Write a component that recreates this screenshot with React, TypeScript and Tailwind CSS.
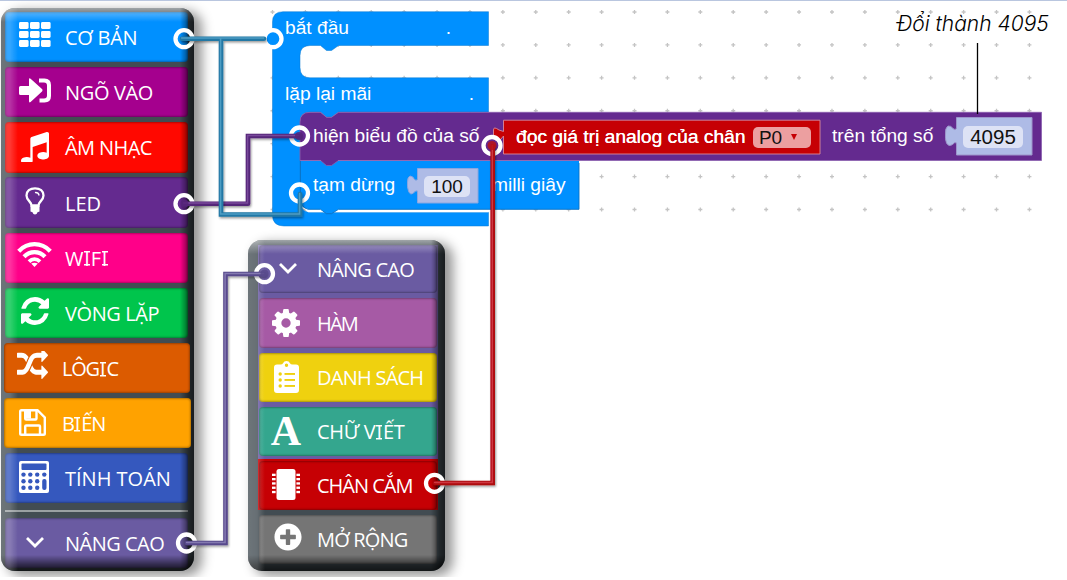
import React from "react";
import { FaPlusCircle } from "react-icons/fa";

function GridIcon() {
  return (
    <svg viewBox="0 0 32 25" className="h-[25px] w-8" fill="#fff">
      {[0, 11, 22].map((x) => [0, 9, 18].map((y) => <rect key={`${x}-${y}`} x={x} y={y} width="9.6" height="7" rx="1.4" />))}
    </svg>
  );
}
function SignInIcon() {
  return (
    <svg viewBox="0 0 32 25" className="h-[25px] w-8" fill="#fff">
      <path d="M1.5 8H10V1.5Q10-.5 11.6.8L23 11Q24 12.2 23 13.4L11.6 24Q10 25.2 10 23V17H1.5Q0 17 0 15.5V9.5Q0 8 1.5 8Z" />
      <path d="M20 .5h5.5Q32 .5 32 7v11Q32 24.5 25.5 24.5H20.5V20.5H25Q28 20.5 28 17.5V7.5Q28 4.5 25 4.5H20Z" />
    </svg>
  );
}
function MusicIcon() {
  return (
    <svg viewBox="128 128 1536 1536" className="h-[30px] w-7" fill="#fff" preserveAspectRatio="none">
      <path d="M1664 224v1120q0 50-34 89t-86 60.5-103.5 32-96.5 10.5-96.5-10.5-103.5-32-86-60.5-34-89 34-89 86-60.5 103.5-32 96.5-10.5q105 0 192 39v-537l-768 237v709q0 50-34 89t-86 60.5-103.5 32-96.5 10.5-96.5-10.5-103.5-32-86-60.5-34-89 34-89 86-60.5 103.5-32 96.5-10.5q105 0 192 39v-967q0-31 19-56.5t49-35.5l832-256q12-4 28-4 40 0 68 28t28 68z" />
    </svg>
  );
}
function BulbIcon() {
  return (
    <svg viewBox="0 0 20 28" className="h-7 w-5" fill="none" stroke="#fff">
      <path d="M6.5 18.5C6.5 14.5 1.5 13.5 1.5 8.5C1.5 4 5 1.3 10 1.3S18.5 4 18.5 8.5C18.5 13.5 13.5 14.5 13.5 18.5Z" strokeWidth="2.3" />
      <path d="M10.5 5.5Q13.5 5.5 14 8" strokeWidth="1.3" strokeLinecap="round" />
      <path d="M5.5 18.5h9v6l-2 .8q-.6 2.2-2.5 2.2t-2.5-2.2l-2-.8Z" fill="#fff" stroke="none" />
    </svg>
  );
}
function WifiIcon() {
  return (
    <svg viewBox="0 0 35 25" className="h-[25px] w-[35px]" fill="none" stroke="#fff" strokeWidth="4.3">
      <path d="M1.7 9.2Q8.5 2.2 17.5 2.2T33.3 9.2" />
      <path d="M7 14.7Q11.5 10.2 17.5 10.2T28 14.7" />
      <path d="M12 19.7Q14.5 17.2 17.5 17.2T23 19.7" strokeWidth="3.8" />
      <path d="M14.2 21.6Q17.5 19.8 20.8 21.6L17.5 25Z" fill="#fff" stroke="none" />
    </svg>
  );
}
function RefreshIcon() {
  return (
    <svg viewBox="128 128 1536 1536" className="h-7 w-7" fill="#fff">
      <path d="M1639 1056q0 5-1 7-64 268-268 434.5t-478 166.5q-146 0-282.5-55t-243.5-157l-129 129q-19 19-45 19t-45-19-19-45v-448q0-26 19-45t45-19h448q26 0 45 19t19 45-19 45l-137 137q71 66 161 102t187 36q134 0 250-65t186-179q11-17 53-117 8-23 30-23h192q13 0 22.5 9.5t9.5 22.5zm25-800v448q0 26-19 45t-45 19h-448q-26 0-45-19t-19-45 19-45l138-138q-148-137-349-137-134 0-250 65t-186 179q-11 17-53 117-8 23-30 23h-199q-13 0-22.5-9.5t-9.5-22.5v-7q65-268 270-434.5t480-166.5q146 0 284 55.5t245 156.5l130-129q19-19 45-19t45 19 19 45z" />
    </svg>
  );
}
function ShuffleIcon() {
  return (
    <svg viewBox="0 160 1792 1472" className="h-7 w-[31px]" fill="#fff" preserveAspectRatio="none">
      <path d="M666 481q-60 92-137 273-22-45-37-72.5t-40.5-63.5-51-56.5-63-35-81.5-14.5h-224q-14 0-23-9t-9-23v-192q0-14 9-23t23-9h224q250 0 410 225zm1126 799q0 14-9 23l-320 320q-9 9-23 9-13 0-22.5-9.5t-9.5-22.5v-192q-32 0-85 .5t-81 1-73-1-71-5-64-10.5-63-18.5-58-28.5-59-40-55-53.5-56-69.5q59-93 136-273 22 45 37 72.5t40.5 63.5 51 56.5 63 35 81.5 14.5h256v-192q0-14 9-23t23-9q12 0 24 10l319 319q9 9 9 23zm0-896q0 14-9 23l-320 320q-9 9-23 9-13 0-22.5-9.5t-9.5-22.5v-192h-256q-48 0-87 15t-69 45-51 61.5-45 77.5q-32 62-78 171-29 66-49.5 111t-54 105-64 100-74 83-90 68.5-106.5 42-128 16.5h-224q-14 0-23-9t-9-23v-192q0-14 9-23t23-9h224q48 0 87-15t69-45 51-61.5 45-77.5q32-62 78-171 29-66 49.5-111t54-105 64-100 74-83 90-68.5 106.5-42 128-16.5h256v-192q0-14 9-23t23-9q12 0 24 10l319 319q9 9 9 23z" />
    </svg>
  );
}
function SaveIcon() {
  return (
    <svg viewBox="0 0 27 27" className="h-[27px] w-[27px]" fill="none" stroke="#fff" strokeWidth="2.4">
      <path d="M2.5 1.2H18.5L25.8 8.5V24.5Q25.8 25.8 24.5 25.8H2.5Q1.2 25.8 1.2 24.5V2.5Q1.2 1.2 2.5 1.2Z" />
      <path d="M6.2 25V17.5Q6.2 16.5 7.2 16.5H20Q21 16.5 21 17.5V25M6.2 1.5V9.5Q6.2 10.5 7.2 10.5H16.5Q17.5 10.5 17.5 9.5V1.5" />
      <path d="M7 2H12V9.5H7Z" fill="#fff" stroke="none" />
    </svg>
  );
}
function CalculatorIcon() {
  return (
    <svg viewBox="0 0 30 32" className="h-8 w-[30px]" fill="#3558be">
      <rect width="30" height="32" rx="2" fill="#fff" />
      <rect x="2.5" y="2.5" width="25" height="6.5" rx="1" />
      {[4.5, 11.3, 18.2].map((x) => [13.6, 20.2, 26.8].map((y) => <circle key={`${x}-${y}`} cx={x} cy={y} r="2.2" />))}
      <circle cx="25.3" cy="13.6" r="2.2" />
      <rect x="23.2" y="18" width="4.3" height="11" rx="2" />
    </svg>
  );
}
function Chevron() {
  return (
    <svg viewBox="0 0 18 11" className="h-[11px] w-[18px]" fill="none" stroke="#fff" strokeWidth="2.8">
      <path d="M1 1L9 9L17 1" />
    </svg>
  );
}
function GearIcon() {
  return (
    <svg viewBox="128 128 1536 1536" className="h-7 w-7" fill="#fff">
      <path d="M1152 896q0-106-75-181t-181-75-181 75-75 181 75 181 181 75 181-75 75-181zm512-109v222q0 12-8 23t-20 13l-185 28q-19 54-39 91 35 50 107 138 10 12 10 25t-9 23q-27 37-99 108t-94 71q-12 0-26-9l-138-108q-44 23-91 38-16 136-29 186-7 28-36 28h-222q-14 0-24.5-8.5t-11.5-21.5l-28-184q-49-16-90-37l-141 107q-10 9-25 9-14 0-25-11-126-114-165-168-7-10-7-23 0-12 8-23 15-21 51-66.5t54-70.5q-27-50-41-99l-183-27q-13-2-21-12.5t-8-23.5v-222q0-12 8-23t19-13l186-28q14-46 39-92-40-57-107-138-10-12-10-24 0-10 9-23 26-36 98.5-107.5t94.5-71.5q13 0 26 10l138 107q44-23 91-38 16-136 29-186 7-28 36-28h222q14 0 24.5 8.5t11.5 21.5l28 184q49 16 90 37l142-107q9-9 24-9 13 0 25 10 129 119 165 170 7 8 7 22 0 12-8 23-15 21-51 66.5t-54 70.5q26 50 41 98l183 28q13 2 21 12.5t8 23.5z" />
    </svg>
  );
}
function ListIcon() {
  return (
    <svg viewBox="0 0 25 32" className="h-8 w-[25px]" fill="#fff">
      <path fillRule="evenodd" d="M3 3.5H6.5Q8.5 3.5 9 2.2Q10 0 12.5 0T16 2.2Q16.5 3.5 18.5 3.5H22Q25 3.5 25 6.5V29Q25 32 22 32H3Q0 32 0 29V6.5Q0 3.5 3 3.5ZM12.5 2.5a1.7 1.7 0 1 0 0 3.4a1.7 1.7 0 1 0 0-3.4Z" />
      <g fill="#efd10f">
        {[13, 19, 25].map((y) => (
          <g key={y}>
            <circle cx="6.2" cy={y} r="1.7" />
            <rect x="10.5" y={y - 1} width="10.5" height="1.9" />
          </g>
        ))}
      </g>
    </svg>
  );
}
function ChipIcon() {
  return (
    <svg viewBox="0 0 28 31" className="h-[31px] w-7" fill="#fff">
      <rect x="4.5" width="19" height="31" rx="2.5" />
      {[4.7, 9, 13.3, 17.6, 21.9].map((y) => (
        <g key={y}>
          <rect y={y} width="3.6" height="2.3" />
          <rect x="24.4" y={y} width="3.6" height="2.3" />
        </g>
      ))}
    </svg>
  );
}

type Item = { label: string; icon: React.ReactNode; row: string; text: string; iconBox?: string };

const mainItems: Item[] = [
  { label: "CƠ BẢN", icon: <GridIcon />, row: "h-[50.5px] bg-[#0090ff]", text: "tracking-[-0.3px]", iconBox: "pb-1" },
  { label: "NGÕ VÀO", icon: <SignInIcon />, row: "h-[50.5px] bg-[#a5008e]", text: "tracking-[-0.35px]", iconBox: "pb-1" },
  { label: "ÂM NHẠC", icon: <MusicIcon />, row: "h-[50.5px] bg-[#ff0800]", text: "tracking-[-0.6px]" },
  { label: "LED", icon: <BulbIcon />, row: "h-[50.5px] bg-[#642a8f]", text: "tracking-[0px]", iconBox: "pb-1" },
  { label: "WIFI", icon: <WifiIcon />, row: "h-[50.5px] bg-[#ff0089]", text: "tracking-[-0.2px]", iconBox: "pb-1.5 pr-0.5" },
  { label: "VÒNG LẶP", icon: <RefreshIcon />, row: "h-[50.5px] bg-[#00c54c]", text: "tracking-[-0.4px]", iconBox: "pb-1" },
  { label: "LÔGIC", icon: <ShuffleIcon />, row: "z-10 -ml-px w-[186px] h-[50px] bg-[#dc5b00]", text: "tracking-[-1.2px] -ml-0.5", iconBox: "pr-1 pb-1.5" },
  { label: "BIẾN", icon: <SaveIcon />, row: "z-10 -ml-px w-[187px] h-[50px] bg-[#ffa200]", text: "tracking-[-1.2px] -ml-0.5", iconBox: "pr-1 pb-0.5" },
  { label: "TÍNH TOÁN", icon: <CalculatorIcon />, row: "h-[50.5px] bg-[#3558be]", text: "tracking-[0px]", iconBox: "pb-0.5 pr-0.5" },
];

const advancedItems: Item[] = [
  { label: "NÂNG CAO", icon: <Chevron />, row: "h-[48px] bg-[#6a5ba2]", text: "tracking-[-0.8px]", iconBox: "pb-0.5" },
  { label: "HÀM", icon: <GearIcon />, row: "h-[49.5px] bg-[#a65aa5]", text: "tracking-[-1.8px]", iconBox: "pr-1" },
  { label: "DANH SÁCH", icon: <ListIcon />, row: "h-[49px] bg-[#efd10f]", text: "tracking-[-0.75px]", iconBox: "pr-1" },
  { label: "CHỮ VIẾT", icon: <span className="[font-family:'Liberation_Serif',serif] text-[42px] font-bold leading-none text-white">A</span>, row: "h-[49px] bg-[#34a68e]", text: "tracking-[-0.3px]", iconBox: "pr-1" },
  { label: "CHÂN CẮM", icon: <ChipIcon />, row: "h-[49.5px] bg-[#c60004]", text: "tracking-[-1px]", iconBox: "pr-1 pb-0.5" },
];

const label = "whitespace-nowrap pt-0.5 [font-family:'Open_Sans','Noto_Sans',sans-serif] text-[20px] leading-none text-white";
const serifI =
  "inline-block h-5 w-[7.5px] text-center leading-none tracking-normal bg-no-repeat bg-[linear-gradient(#fff,#fff),linear-gradient(#fff,#fff)] bg-[length:6px_1.5px] bg-[position:center_2.5px,center_15.5px]";
const rowBase = "relative flex shrink-0 items-center rounded-[4px] shadow-[inset_0_0_2px_1px_rgba(0,0,0,0.3)]";
const bevel =
  "pointer-events-none absolute inset-0 rounded-[14px] bg-[linear-gradient(to_right,rgba(255,255,255,0.23)_0px,rgba(255,255,255,0.2)_9px,transparent_17px),linear-gradient(to_left,rgba(0,0,0,0.62)_0px,rgba(0,0,0,0.5)_5px,transparent_14px),linear-gradient(to_bottom,rgba(255,255,255,0.5)_0px,rgba(255,255,255,0.3)_5px,transparent_14px),linear-gradient(to_top,rgba(0,0,0,0.7)_0px,rgba(0,0,0,0.55)_6px,transparent_16px)]";
const panel = "relative flex flex-col rounded-[14px] bg-[#424c52] shadow-[7px_4px_12px_1px_rgba(0,0,0,0.42)]";

function Row({ item, iconWidth }: { item: Item; iconWidth: string }) {
  return (
    <div className={`${rowBase} ${item.row}`}>
      <span className={`flex h-full shrink-0 items-center justify-center ${iconWidth} ${item.iconBox ?? ""}`}>{item.icon}</span>
      <span className={`${label} ${item.text}`}>
        {item.label.split(/(I)/).map((part, n) => (part === "I" ? <span key={n} className={serifI}>I</span> : part))}
      </span>
    </div>
  );
}

function Toolbox() {
  return (
    <aside className={`${panel} ml-px mt-2 h-[563px] w-[193px] gap-[6.5px] pl-1 pr-1.5 pt-[3.5px]`}>
      <div className="flex flex-col gap-[4.8px]">
        {mainItems.map((i) => (
          <Row key={i.label} item={i} iconWidth="w-[60px]" />
        ))}
      </div>
      <div className="h-0.5 shrink-0 bg-[#9aa0a2]" />
      <Row item={{ label: "NÂNG CAO", icon: <Chevron />, row: "h-[49.5px] bg-[#6a5ba2]", text: "tracking-[-0.5px]", iconBox: "pb-0.5" }} iconWidth="w-[60px]" />
      <div className={bevel} />
    </aside>
  );
}

function AdvancedToolbox() {
  return (
    <aside className={`${panel} ml-[54px] mt-60 h-[331px] w-[197px] gap-[5px] pl-2.5 pr-[7px] pt-[5px]`}>
      <div className="flex flex-col gap-[5px] bg-[linear-gradient(to_bottom,#6a5ba2_214px,#c60004_214px)] px-px">
        {advancedItems.map((i) => (
          <Row key={i.label} item={i} iconWidth="w-[58px]" />
        ))}
      </div>
      <Row item={{ label: "MỞ RỘNG", icon: <FaPlusCircle className="h-7 w-7 text-white" />, row: "mx-px h-[48.5px] bg-[#757575]", text: "tracking-[-0.85px]", iconBox: "pb-1" }} iconWidth="w-[58px]" />
      <div className={bevel} />
    </aside>
  );
}

function BlockShapes() {
  const cols = Array.from({ length: 24 }, (_, i) => 272.5 + i * 32.91);
  const rows = Array.from({ length: 7 }, (_, i) => 12 + i * 32.92);
  return (
    <svg className="absolute inset-0" width="1067" height="580" viewBox="0 0 1067 580">
      <path d={cols.map((x) => rows.map((y) => `M${x - 2} ${y}h4M${x} ${y - 2}v4`).join("")).join("")} stroke="#c4c4c4" strokeWidth="1.3" fill="none" />
      <path d="M272.5 22Q272.5 11.7 283 11.7H488.5V45.5H338.5L331.5 50.5H326.5L320.5 45.5H310Q300 45.5 300 55.5V67.5Q300 77.8 310 77.8H488.5V112H338.5L331.5 117H326.5L320.5 112H310Q300 112 300 122V199Q300 212.3 310 212.3H488.5V226H284Q272.5 226 272.5 215Z" fill="#0090ff" stroke="#0878d0" strokeWidth=".5" />
      <path d="M302 206L308 212.2H488.5V208Z" fill="#fff" />
      <path d="M300 161H579V209.3H338.5L331.5 213.7H326.5L320.5 209.3H310Q300 209 300 200Z" fill="#0090ff" />
      <path d="M300.5 161V200Q301 207 308 209.3H320.5L326.5 213.7H331.500L338.500 209.300H579V163" fill="none" stroke="#0a72c4" strokeWidth=".9" />
      <path d="M300 122Q300 112.3 310 112.3H320.5L326.5 117.3H331.5L338.5 112.3H1041.5V160.5H338.5L331.5 165.5H326.5L320.5 160.5H300Z" fill="#642a8f" stroke="#8a5fae" strokeWidth=".8" />
      <path d="M503.5 120.2H820V154H503.5V136L500 140Q493.5 142 493.5 136V130Q493.5 126 499 130L503.5 131.5Z" fill="#c60004" stroke="#d98a9a" strokeWidth=".9" />
      <path d="M956.5 117.5H1032V155H956.5V143Q955 141.5 952.5 144.5Q948.5 147 946.5 143Q945 139 945.5 134Q945 128 948 126Q951 125.5 953 128.5Q955 130.5 956.5 128.5Z" fill="#aebbe6" stroke="#9d95cb" />
      <path d="M417.5 168.5H478V203H417.5V191Q415.5 190 413.5 193Q410 195.5 408.5 191Q407 187 407.5 182Q407.5 177 410 176Q413 176 414.5 179.5Q416 181 417.5 179.5Z" fill="#aebbe6" stroke="#8aa5e0" />
      <path d="M977.5 43V114" stroke="#000" strokeWidth="1.3" />
    </svg>
  );
}

const line = "absolute flex items-center whitespace-nowrap text-[19.2px] leading-[24px] text-white [font-family:'Liberation_Sans',Arial,sans-serif]";
const field = "flex shrink-0 items-center justify-center rounded-[5px] leading-none text-[#111]";

function BlockLabels() {
  return (
    <>
      <div className={`${line} left-[285px] top-[16px] w-[166px] justify-between`}>
        <span>bắt đầu</span>
        <span>.</span>
      </div>
      <div className={`${line} left-[285px] top-[82px] w-[189px] justify-between`}>
        <span>lặp lại mãi</span>
        <span>.</span>
      </div>
      <div className={`${line} left-[313px] top-[124px]`}>
        <span className="w-[203px] pb-0.5">hiện biểu đồ của số</span>
        <span className="w-[237px] [text-shadow:0.3px_0_0_#fff]">đọc giá trị analog của chân</span>
        <span className={`${field} h-[21px] w-[58px] gap-[9px] bg-[#ec9fa0] pr-2 text-[19px]`}>
          P0
          <svg viewBox="0 0 6 6" className="h-1.5 w-1.5" fill="#c60004"><path d="M0 0H6L3 6Z" /></svg>
        </span>
        <span className="ml-[21px] w-[131px] pb-0.5">trên tổng số</span>
        <span className={`${field} h-[22px] w-[60px] bg-[#dde2f5] text-[20.5px]`}>4095</span>
      </div>
      <div className={`${line} left-[313px] top-[173px]`}>
        <span className="w-[111px] pb-[3px]">tạm dừng</span>
        <span className={`${field} h-[21px] w-[46px] bg-[#dde2f5] pb-px text-[19px]`}>100</span>
        <span className="ml-[22px] pb-[3px]">milli giây</span>
      </div>
      <span className="absolute left-[897px] top-[11px] whitespace-nowrap text-[21px] font-light italic leading-[26px] text-black [font-family:Inter,sans-serif]">Đổi thành 4095</span>
    </>
  );
}

function Wire({ d, dark, light }: { d: string; dark: string; light: string }) {
  return (
    <g fill="none" strokeLinecap="round" filter="url(#wire-shadow)">
      <path d={d} stroke={dark} strokeWidth="4.6" />
      <path d={d} stroke={light} strokeWidth="1.5" strokeOpacity=".75" transform="translate(-.4 -.6)" />
    </g>
  );
}

function Connectors() {
  const rings = [[184, 38.7], [273, 38.7], [184, 203.7], [299.5, 136], [299.5, 193], [492, 145.5], [264.5, 273.7], [434.5, 483.3], [186.5, 543]];
  return (
    <svg className="pointer-events-none absolute inset-0 z-20" width="1067" height="580" viewBox="0 0 1067 580">
      <defs>
        <filter id="wire-shadow" x="0" y="0" width="1067" height="580" filterUnits="userSpaceOnUse">
          <feDropShadow dx="1" dy="1.5" stdDeviation="1" floodColor="#000" floodOpacity=".4" />
        </filter>
      </defs>
      <circle cx="273" cy="38.7" r="7" fill="#0090ff" />
      {rings.map(([x, y]) => (
        <circle key={`${x}-${y}`} cx={x} cy={y} r="8.5" fill="none" stroke="#fff" strokeWidth="4.3" />
      ))}
      <Wire d="M248 203.7V136H299M184 203.7H248" dark="#552579" light="#8457a5" />
      <Wire d="M182 38.7H264M221 38.7V214.5H300V194" dark="#2478a5" light="#5ca9cd" />
      <Wire d="M187 543H225.5V274H264" dark="#584a8c" light="#9389bd" />
      <Wire d="M435 483H492.7V146" dark="#ae0710" light="#d84a50" />
      <g opacity=".85">
        <circle cx="299" cy="136" r="4" fill="#552579" />
        <circle cx="184.5" cy="203.7" r="4" fill="#552579" />
        <circle cx="492" cy="145.5" r="4.5" fill="#b8141a" />
        <circle cx="264.5" cy="273.7" r="4" fill="#584a8c" />
      </g>
    </svg>
  );
}

export default function App() {
  return (
    <main className="relative flex h-[577px] w-[1067px] items-start overflow-hidden border-t border-[#b9c6df] bg-white *:-mt-px">
      <BlockShapes />
      <BlockLabels />
      <div className="flex items-start">
        <Toolbox />
        <AdvancedToolbox />
      </div>
      <Connectors />
    </main>
  );
}
